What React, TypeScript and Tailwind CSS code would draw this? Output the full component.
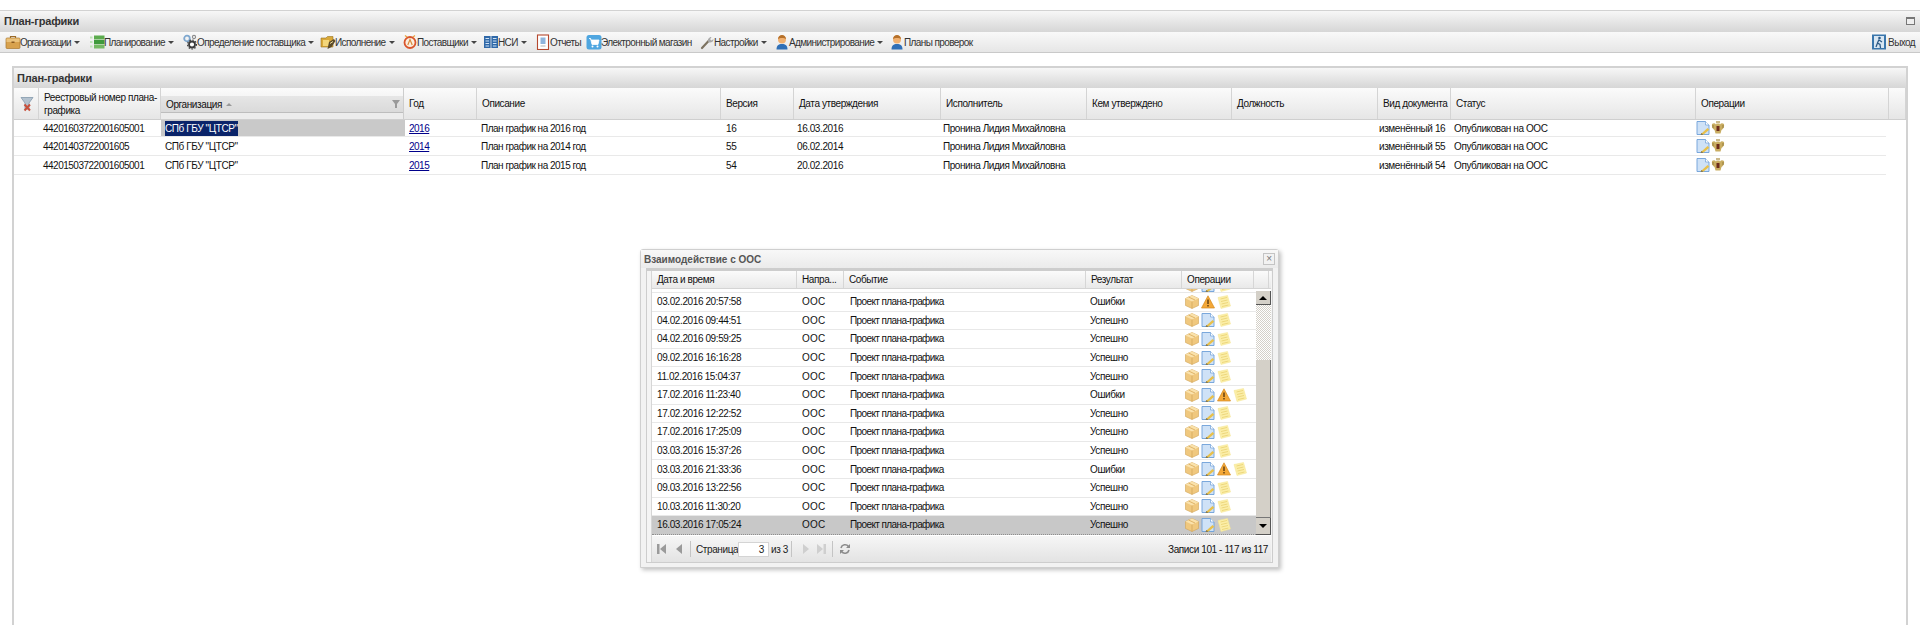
import type { ReactNode } from 'react';

const font = "font-['Liberation_Sans',Arial,sans-serif]";

function Briefcase() {
  return (
    <svg viewBox="0 0 16 16" className="size-[16px]">
      <path d="M5.5 4V2.500h5V4" fill="none" stroke="#9a6a2a" strokeWidth="1.200" />
      <rect x="1" y="4" width="14" height="10.500" rx="1" fill="#d8a24e" stroke="#a8762e" strokeWidth="0.700" />
      <rect x="1.500" y="4.500" width="13" height="3.500" fill="#eac27c" />
      <rect x="6.500" y="7.500" width="3" height="1.500" fill="#8a5a20" />
    </svg>
  );
}

function Planning() {
  return (
    <svg viewBox="0 0 16 16" className="size-[16px]">
      <rect x="1" y="2.500" width="2.500" height="2" fill="#bfe3b8" />
      <rect x="1" y="7" width="2.500" height="2" fill="#bfe3b8" />
      <rect x="1" y="11.500" width="2.500" height="2" fill="#bfe3b8" />
      <rect x="5" y="1.500" width="10.500" height="4" fill="#5cab4e" />
      <rect x="5" y="6" width="10.500" height="4" fill="#3f9a3c" />
      <rect x="5" y="10.500" width="10.500" height="4" fill="#74b963" />
    </svg>
  );
}

function Gears() {
  return (
    <svg viewBox="0 0 16 16" className="size-[16px]">
      <circle cx="5" cy="4.500" r="2.800" fill="none" stroke="#7fa8cf" strokeWidth="1.800" />
      <circle cx="10" cy="10.500" r="3" fill="#fff" stroke="#3c3c3c" strokeWidth="1.800" />
      <circle cx="10" cy="10.500" r="4.500" fill="none" stroke="#3c3c3c" strokeWidth="1.100" strokeDasharray="1.500 1.500" />
      <circle cx="12" cy="3" r="1.600" fill="none" stroke="#8c8c8c" strokeWidth="1.100" />
    </svg>
  );
}

function Execution() {
  return (
    <svg viewBox="0 0 16 16" className="size-[16px]">
      <path d="M1 4h5l1.500-1.500H13V13H1z" fill="#d9a93a" stroke="#9a7420" strokeWidth="0.600" />
      <rect x="3" y="6" width="6" height="6" fill="#f3d67a" />
      <path d="M9 8l5-3 1.500 2-4 6-4 2z" fill="#5a4a2a" />
      <path d="M10 9.500l3-2" stroke="#f0e0a0" strokeWidth="1" />
    </svg>
  );
}

function Suppliers() {
  return (
    <svg viewBox="0 0 16 16" className="size-[16px]">
      <circle cx="8" cy="8.500" r="5.500" fill="#fbeee0" stroke="#d9552c" strokeWidth="1.800" />
      <path d="M5.800 11 8 5.500l2.200 5.500" fill="none" stroke="#d98a3c" strokeWidth="1.200" />
      <path d="M5 3 3 1.500M11 3l2-1.500" stroke="#e8a23c" strokeWidth="1.200" />
    </svg>
  );
}

function Book() {
  return (
    <svg viewBox="0 0 16 16" className="size-[16px]">
      <rect x="1" y="2" width="6.600" height="12" fill="#2f68a8" />
      <rect x="8.400" y="2" width="6.600" height="12" fill="#2f68a8" />
      <path d="M2.500 4.500h3.600M2.500 7h3.600M2.500 9.500h3.600M2.500 12h3.600M9.900 4.500h3.600M9.900 7h3.600M9.900 9.500h3.600M9.900 12h3.600" stroke="#cfe2f5" strokeWidth="1" />
    </svg>
  );
}

function Report() {
  return (
    <svg viewBox="0 0 16 16" className="size-[16px]">
      <rect x="2.500" y="1" width="11" height="14.500" fill="#fff" stroke="#b5482e" strokeWidth="1.100" />
      <rect x="5.500" y="3.500" width="5" height="6.500" fill="#8fb4dc" />
      <path d="M5.500 12h5" stroke="#b5b5b5" strokeWidth="1" />
    </svg>
  );
}

function Shop() {
  return (
    <svg viewBox="0 0 16 16" className="size-[16px]">
      <rect x="0.500" y="1" width="15" height="14.500" rx="2.500" fill="#4fa6e0" />
      <path d="M3 4.500h1.600l1.400 6h6l1-4.500H5" fill="#fff" stroke="#fff" strokeWidth="0.800" />
      <circle cx="6.500" cy="12.500" r="1" fill="#fff" />
      <circle cx="11.500" cy="12.500" r="1" fill="#fff" />
    </svg>
  );
}

function Wrench() {
  return (
    <svg viewBox="0 0 16 16" className="size-[16px]">
      <path d="M3 14 10 6.500" stroke="#7d7361" strokeWidth="2.200" strokeLinecap="round" />
      <path d="M9 7.500c-.5-2 .8-4.500 3.500-4.500l-1.400 2.200 1.400 1.300L14.500 5c.3 2.600-2.500 4-4.300 3.500z" fill="#a9a9a9" />
    </svg>
  );
}

function Person() {
  return (
    <svg viewBox="0 0 16 16" className="size-[16px]">
      <path d="M2.500 15.500c0-3.800 2-5.500 5.500-5.500s5.500 1.700 5.500 5.500z" fill="#2f6fb6" />
      <circle cx="8" cy="5.500" r="4" fill="#f0b070" />
      <path d="M4 5c.3-2.800 2-4 4-4s3.700 1.200 4 4c-1.500-1.500-6.500-1.500-8 0z" fill="#b5702a" />
    </svg>
  );
}

function ExitIcon() {
  return (
    <svg viewBox="0 0 16 16" className="size-[16px]">
      <rect x="1" y="0.500" width="14" height="15" fill="#3a76ac" />
      <rect x="3" y="2" width="10" height="12" fill="#d8e6f2" />
      <circle cx="8.500" cy="4" r="1.300" fill="#2c5a86" />
      <path d="M8 5.500 6.500 9l2.500 1.500.5 3.500M6.500 9 5 13M8 6l3 2" fill="none" stroke="#2c5a86" strokeWidth="1.300" />
    </svg>
  );
}

function DocPencil() {
  return (
    <svg viewBox="0 0 14 14" className="size-[14px] shrink-0">
      <path d="M1 .5h8.500l3.500 3.500v9.500h-12z" fill="#cfe2f7" stroke="#6d9fd8" strokeWidth="0.900" />
      <path d="M9.500 .5v3.500h3.500" fill="#fff" stroke="#6d9fd8" strokeWidth="0.700" />
      <path d="M5.500 12.500 11.500 7l1.800 1.800-6 5z" fill="#e8c04a" />
      <path d="M4.500 13.700 5.500 12l1.800 1.700z" fill="#8a6a20" />
    </svg>
  );
}

function Eagle() {
  return (
    <svg viewBox="0 0 14 14" className="size-[14px] shrink-0">
      <path d="M1 3c1.500-1 3-1 4 .5L6 2l1 1 1-1 1 1.500C10 2 11.500 2 13 3c.5 3-.5 5-2.500 6l-1 3.500H4.500l-1-3.500C1.500 8 .5 6 1 3z" fill="#c9ad62" />
      <rect x="5.500" y="5" width="3" height="5" fill="#6d2a1a" />
      <path d="M5 1h4" stroke="#a88a3c" strokeWidth="1.200" />
      <path d="M2 4v3M12 4v3" stroke="#8a7232" strokeWidth="0.800" />
    </svg>
  );
}

function BoxIcon() {
  return (
    <svg viewBox="0 0 14 14" className="size-[14px] shrink-0">
      <path d="M7 .5 13.500 3.500v7L7 13.500.5 10.500v-7z" fill="#f0c87e" stroke="#d0a458" strokeWidth="0.600" strokeLinejoin="round" />
      <path d="M.5 3.500 7 6.500l6.500-3L7 .5z" fill="#fae2ac" />
      <path d="M7 6.500v7" stroke="#d0a458" strokeWidth="0.700" />
      <path d="M3.500 2 10 5" stroke="#e0b468" strokeWidth="1" />
    </svg>
  );
}

function Warn() {
  return (
    <svg viewBox="0 0 14 14" className="size-[14px] shrink-0">
      <path d="M7 .8 13.500 13H.5z" fill="#f4a838" stroke="#d48a20" strokeWidth="0.700" />
      <rect x="6.300" y="4.500" width="1.400" height="4.500" fill="#5a3a10" />
      <rect x="6.300" y="10" width="1.400" height="1.500" fill="#5a3a10" />
    </svg>
  );
}

function Note() {
  return (
    <svg viewBox="0 0 14 14" className="size-[14px] shrink-0">
      <path d="M1 2.500 10.500.5l3 10.500-9.500 2.500z" fill="#fbeea8" stroke="#f5e490" strokeWidth="0.500" />
      <path d="M3.500 4 10 2.500M4 6.500l6.500-1.500M4.500 9 11 7.500M5 11.500 11.500 10" stroke="#e8d070" strokeWidth="0.800" />
    </svg>
  );
}

function ClearFilter() {
  return (
    <svg viewBox="0 0 14 16" className="ml-[1px] h-[16px] w-[14px]">
      <path d="M1 1.500h12L9 7v6H5V7z" fill="#b4c2cf" stroke="#8499ac" strokeWidth="0.800" />
      <path d="M4.500 8.500 10 14.500M10 8.500 4.500 14.500" stroke="#c8503c" strokeWidth="2" />
    </svg>
  );
}

function Caret() {
  return <span className="ml-[3px] size-0 shrink-0 border-x-[3px] border-t-[3px] border-x-transparent border-t-[#444]" />;
}

type ToolItem = { label: string; icon: ReactNode; caret?: boolean; width: string; text?: string };

const tools: ToolItem[] = [
  { label: 'Организации', icon: <Briefcase />, caret: true, width: 'w-[84px]', text: 'tracking-[-0.9px]' },
  { label: 'Планирование', icon: <Planning />, caret: true, width: 'w-[93px]' },
  { label: 'Определение поставщика', icon: <Gears />, caret: true, width: 'w-[138px]' },
  { label: 'Исполнение', icon: <Execution />, caret: true, width: 'w-[82px]' },
  { label: 'Поставщики', icon: <Suppliers />, caret: true, width: 'w-[81px]' },
  { label: 'НСИ', icon: <Book />, caret: true, width: 'w-[52px]' },
  { label: 'Отчеты', icon: <Report />, width: 'w-[51px]' },
  { label: 'Электронный магазин', icon: <Shop />, width: 'w-[113px]' },
  { label: 'Настройки', icon: <Wrench />, caret: true, width: 'w-[75px]' },
  { label: 'Администрирование', icon: <Person />, caret: true, width: 'w-[115px]' },
  { label: 'Планы проверок', icon: <Person />, width: 'w-[90px]' },
];

const headCols = 'grid-cols-[25px_122px_243px_73px_244px_73px_147px_146px_145px_146px_73px_245px_193px_17px]';
const rowCols = 'grid-cols-[25px_122px_244px_72px_245px_71px_146px_146px_145px_145px_75px_242px_194px]';

const headers = [
  '',
  'Реестровый номер плана-графика',
  'Организация',
  'Год',
  'Описание',
  'Версия',
  'Дата утверждения',
  'Исполнитель',
  'Кем утверждено',
  'Должность',
  'Вид документа',
  'Статус',
  'Операции',
  '',
];

const plans = [
  { num: '44201603722001605001', year: '2016', desc: 'План график на 2016 год', ver: '16', date: '16.03.2016', kind: 'изменённый 16', height: 'h-[17px]', selected: true },
  { num: '44201403722001605', year: '2014', desc: 'План график на 2014 год', ver: '55', date: '06.02.2014', kind: 'изменённый 55', height: 'h-[19px]', selected: false },
  { num: '44201503722001605001', year: '2015', desc: 'План график на 2015 год', ver: '54', date: '20.02.2016', kind: 'изменённый 54', height: 'h-[19px]', selected: false },
];

const PLAN_CELL = 'whitespace-nowrap px-[4px] leading-[15px] self-center';

function PlanRow({ plan }: { plan: (typeof plans)[number] }) {
  return (
    <div className={`grid ${rowCols} ${plan.height} w-[1872px] border-b border-[#e9e9e9]`}>
      <div />
      <div className={`${PLAN_CELL} tracking-[-0.5px]`}>{plan.num}</div>
      {plan.selected ? (
        <div className="flex items-center bg-[#c9c9c9] px-[4px]">
          <span className="bg-[#0a246a] tracking-[-0.4px] text-white">СПб ГБУ "ЦТСР"</span>
        </div>
      ) : (
        <div className={`${PLAN_CELL} tracking-[-0.4px]`}>СПб ГБУ "ЦТСР"</div>
      )}
      <div className={`${PLAN_CELL} tracking-[-0.5px] text-[#00008b] underline`}>{plan.year}</div>
      <div className={`${PLAN_CELL} tracking-[-0.5px]`}>{plan.desc}</div>
      <div className={PLAN_CELL}>{plan.ver}</div>
      <div className={PLAN_CELL}>{plan.date}</div>
      <div className={`${PLAN_CELL} tracking-[-0.45px]`}>Пронина Лидия Михайловна</div>
      <div />
      <div />
      <div className={PLAN_CELL}>{plan.kind}</div>
      <div className={PLAN_CELL}>Опубликован на ООС</div>
      <div className="flex items-center gap-[1px] px-[4px]">
        <DocPencil />
        <Eagle />
      </div>
    </div>
  );
}

type LogKind = 'ok' | 'warn' | 'docwarn';

const logRows: { date: string; result: string; kind: LogKind }[] = [
  { date: '03.02.2016 20:57:58', result: 'Ошибки', kind: 'warn' },
  { date: '04.02.2016 09:44:51', result: 'Успешно', kind: 'ok' },
  { date: '04.02.2016 09:59:25', result: 'Успешно', kind: 'ok' },
  { date: '09.02.2016 16:16:28', result: 'Успешно', kind: 'ok' },
  { date: '11.02.2016 15:04:37', result: 'Успешно', kind: 'ok' },
  { date: '17.02.2016 11:23:40', result: 'Ошибки', kind: 'docwarn' },
  { date: '17.02.2016 12:22:52', result: 'Успешно', kind: 'ok' },
  { date: '17.02.2016 17:25:09', result: 'Успешно', kind: 'ok' },
  { date: '03.03.2016 15:37:26', result: 'Успешно', kind: 'ok' },
  { date: '03.03.2016 21:33:36', result: 'Ошибки', kind: 'docwarn' },
  { date: '09.03.2016 13:22:56', result: 'Успешно', kind: 'ok' },
  { date: '10.03.2016 11:30:20', result: 'Успешно', kind: 'ok' },
  { date: '16.03.2016 17:05:24', result: 'Успешно', kind: 'ok' },
];

const logCols = 'grid-cols-[145px_47px_242px_96px_72px]';

function LogIcons({ kind }: { kind: LogKind }) {
  return (
    <div className="flex items-center gap-[2px] pl-[3px]">
      <BoxIcon />
      {kind === 'warn' ? <Warn /> : <DocPencil />}
      {kind === 'docwarn' && <Warn />}
      <Note />
    </div>
  );
}

function LogRow({ row, selected }: { row: (typeof logRows)[number]; selected: boolean }) {
  return (
    <div
      className={`grid ${logCols} h-[18.6px] items-center border-b ${
        selected ? 'border-dotted border-[#8e8e8e] bg-[#c8c8c8]' : 'border-[#e8e8e8]'
      }`}
    >
      <div className="pl-[5px]">{row.date}</div>
      <div className="pl-[5px] tracking-[0.2px]">ООС</div>
      <div className="pl-[6px] tracking-[-0.6px]">Проект плана-графика</div>
      <div className="pl-[4px]">{row.result}</div>
      <LogIcons kind={row.kind} />
    </div>
  );
}

function Sep() {
  return <span className="h-[16px] w-px bg-[#c4c4c4]" />;
}

function Pager() {
  return (
    <div className="flex h-[26px] items-center justify-between bg-gradient-to-b from-[#f6f6f6] to-[#e3e3e3] pl-[5px] pr-[3px]">
      <div className="flex items-center text-[#222]">
        <svg viewBox="0 0 9 10" className="h-[10px] w-[9px]">
          <rect x="0" y="0" width="2.500" height="10" fill="#9a9a9a" />
          <path d="M9 0v10L3 5z" fill="#9a9a9a" />
        </svg>
        <svg viewBox="0 0 6 10" className="ml-[10px] mr-[8px] h-[10px] w-[6px]">
          <path d="M6 0v10L0 5z" fill="#9a9a9a" />
        </svg>
        <Sep />
        <span className="ml-[5px] w-[42px]">Страница</span>
        <span className="h-[15px] w-[31px] border border-[#d4d4d4] bg-white pr-[4px] text-right leading-[14px]">3</span>
        <span className="ml-[2px] w-[20px]">из 3</span>
        <Sep />
        <svg viewBox="0 0 6 10" className="ml-[11px] mr-[8px] h-[10px] w-[6px]">
          <path d="M0 0v10l6-5z" fill="#cfcfcf" />
        </svg>
        <svg viewBox="0 0 9 10" className="mr-[6px] h-[10px] w-[9px]">
          <path d="M0 0v10l6-5z" fill="#cfcfcf" />
          <rect x="6.500" y="0" width="2.500" height="10" fill="#cfcfcf" />
        </svg>
        <Sep />
        <svg viewBox="0 0 12 12" className="ml-[6px] size-[12px]">
          <path d="M2 5a4.200 4.200 0 0 1 7.500-1.500M10 7a4.200 4.200 0 0 1-7.500 1.500" fill="none" stroke="#8c8c8c" strokeWidth="1.600" />
          <path d="M11 1v4H7zM1 11V7h4z" fill="#8c8c8c" />
        </svg>
      </div>
      <span>Записи 101 - 117 из 117</span>
    </div>
  );
}

function ScrollBar() {
  return (
    <div className="flex w-[15px] flex-col">
      <div className="h-[2px] bg-white" />
      <div className="flex h-[14px] items-center justify-center border-b border-r border-b-[#555] border-r-[#555] bg-[#d4d0c8]">
        <span className="size-0 border-x-[4px] border-b-[4px] border-x-transparent border-b-black" />
      </div>
      <div className="h-[55px] bg-[repeating-conic-gradient(#d4d0c8_0_25%,#fff_0_50%)] bg-[length:2px_2px]" />
      <div className="h-[158px] border-b border-r border-b-[#777] border-r-[#777] bg-[#d4d0c8]" />
      <div className="flex h-[17px] items-center justify-center border-b border-r border-b-[#555] border-r-[#555] bg-[#d4d0c8]">
        <span className="size-0 border-x-[4px] border-t-[4px] border-x-transparent border-t-black" />
      </div>
    </div>
  );
}

function OosWindow() {
  return (
    <div className="absolute left-[640px] top-[249px] flex h-[319px] w-[639px] flex-col rounded-t-[3px] border border-[#cfcfcf] bg-[#f2f2f2] shadow-[2px_2px_4px_rgba(0,0,0,0.25)]">
      <div className="flex h-[18px] items-center justify-between bg-gradient-to-b from-[#f8f8f8] to-[#ebebeb] pl-[3px] pr-[3px]">
        <span className="text-[10px] font-bold tracking-normal text-[#555]">Взаимодействие с ООС</span>
        <span className="flex size-[12px] items-center justify-center border border-[#c4c4c4] bg-[#f2f2f2] text-[10px] leading-none text-[#777]">×</span>
      </div>
      <div className="mx-[5px] mb-[4px] flex flex-1 flex-col border border-[#cdcdcd] border-t-[3px] bg-[#f4f4f4] pl-[4px] pr-[1px]">
        <div className="flex flex-1 flex-col border-l border-[#d6d6d6] bg-white">
          <div className="grid h-[18px] w-full grid-cols-[145px_47px_242px_96px_72px_15px] border-b border-[#d4d4d4] bg-gradient-to-b from-[#fbfbfb] to-[#e9e9e9]">
            {['Дата и время', 'Напра...', 'Событие', 'Результат', 'Операции', ''].map((h, i) => (
              <div key={i} className="flex items-center border-r border-[#d6d6d6] pl-[5px]">
                {h}
              </div>
            ))}
          </div>
          <div className="flex flex-1">
            <div className="flex-1 overflow-hidden">
              <div className="flex h-[4px] items-end overflow-hidden border-b border-[#e8e8e8] pl-[533px]">
                <div className="flex h-[14px] shrink-0 gap-[2px]">
                  <BoxIcon />
                  <DocPencil />
                  <Note />
                </div>
              </div>
              {logRows.map((row, i) => (
                <LogRow key={row.date} row={row} selected={i === logRows.length - 1} />
              ))}
            </div>
            <ScrollBar />
          </div>
          <Pager />
        </div>
      </div>
    </div>
  );
}

export default function App() {
  return (
    <div className={`relative h-[625px] w-[1920px] overflow-hidden bg-white pt-[10px] text-[10px] tracking-[-0.4px] text-[#111] ${font}`}>
      <div className="relative flex h-[22px] items-center border-t border-[#d2d2d2] bg-gradient-to-b from-[#f7f7f7] to-[#d6d6d6] pl-[4px]">
        <span className="text-[11px] font-bold tracking-[-0.2px] text-[#333]">План-графики</span>
        <span className="absolute right-[5px] top-[6px] h-[8px] w-[9px] border border-[#777] border-t-2 bg-[#eee]" />
      </div>
      <div className="flex h-[21px] items-center justify-between border-b border-[#c9c9c9] bg-gradient-to-b from-[#f9f9f9] to-[#e6e6e6] pl-[5px] pr-[5px] tracking-[-0.6px] text-[#333]">
        <div className="flex items-center">
          {tools.map((t) => (
            <div key={t.label} className={`flex items-center ${t.width}`}>
              <span className="w-[15px] shrink-0">{t.icon}</span>
              <span className={`whitespace-nowrap ${t.text ?? ''}`}>{t.label}</span>
              {t.caret && <Caret />}
            </div>
          ))}
        </div>
        <div className="flex items-center gap-[1px]">
          <ExitIcon />
          <span>Выход</span>
        </div>
      </div>
      <div className="ml-[12px] mt-[13px] flex h-[559px] w-[1896px] flex-col border-x-2 border-t-2 border-[#d2d2d2]">
        <div className="flex h-[20px] shrink-0 items-center bg-gradient-to-b from-[#f7f7f7] to-[#d6d6d6] pl-[3px]">
          <span className="text-[11px] font-bold tracking-[-0.2px] text-[#333]">План-графики</span>
        </div>
        <div className={`grid ${headCols} h-[32px] shrink-0 border-b border-[#cfcfcf] bg-gradient-to-b from-[#fbfbfb] to-[#e6e6e6]`}>
          {headers.map((h, i) =>
            h === 'Организация' ? (
              <div key={h} className="flex flex-col border-r border-[#cdcdcd]">
                <div className="h-[8px]" />
                <div className="flex h-[17px] items-center justify-between border-b border-[#bdbdbd] bg-gradient-to-b from-[#e6e6e6] to-[#dadada] pl-[5px] pr-[3px]">
                  <span className="flex items-center gap-[4px]">
                    Организация
                    <span className="size-0 border-x-[3px] border-b-[3px] border-x-transparent border-b-[#999]" />
                  </span>
                  <svg viewBox="0 0 8 8" className="size-[8px]">
                    <path d="M0 0h8L5 4v4H3V4z" fill="#999" />
                  </svg>
                </div>
                <div className="flex-1 bg-[#ececec]" />
              </div>
            ) : (
              <div key={i} className="flex items-center border-r border-[#d4d4d4] pl-[5px] pr-[2px] leading-[13px]">
                {i === 0 ? <ClearFilter /> : h}
              </div>
            ),
          )}
        </div>
        {plans.map((p) => (
          <PlanRow key={p.num} plan={p} />
        ))}
      </div>
      <OosWindow />
    </div>
  );
}
